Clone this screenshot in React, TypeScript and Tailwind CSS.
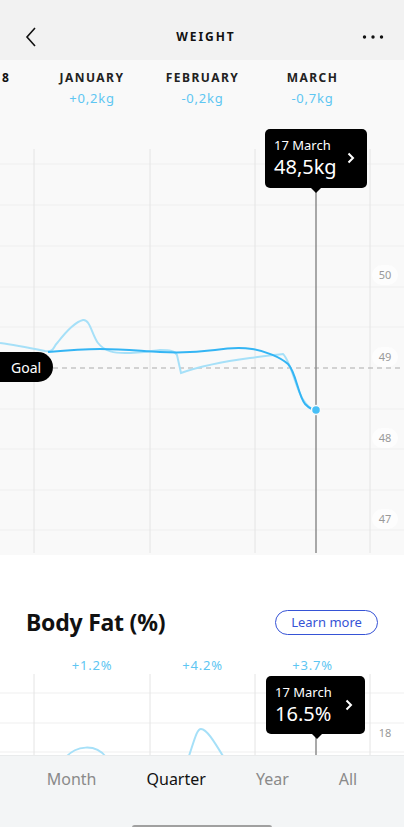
import React from 'react'

const vLines = [34, 150, 255, 370]
const hLines = [164, 205, 246, 287, 327, 409, 449, 490, 530]
const yLabels = [
  { v: '50', y: 275 },
  { v: '49', y: 357 },
  { v: '48', y: 438 },
  { v: '47', y: 519 },
]
const months = [
  { name: 'JANUARY', delta: '+0,2kg' },
  { name: 'FEBRUARY', delta: '-0,2kg' },
  { name: 'MARCH', delta: '-0,7kg' },
]

const Tooltip: React.FC<{ date: string; value: string; className: string }> = ({ date, value, className }) => (
  <div className={`absolute ${className}`}>
    <div className="relative h-full w-full rounded-[5px] bg-black pl-[9px] pt-[8px] text-white">
      <div className="text-[13px] leading-[16px]">{date}</div>
      <div className="text-[20px] leading-[28px]">{value}</div>
      <svg className="absolute right-[12px] top-[23px]" width="8" height="12" viewBox="0 0 8 12">
        <polyline points="1.5,1.5 6,6 1.5,10.5" fill="none" stroke="white" strokeWidth="2" />
      </svg>
      <div className="absolute bottom-[-5px] left-[46px] h-0 w-0 border-x-[5px] border-t-[5px] border-x-transparent border-t-black" />
    </div>
  </div>
)

export default function App() {
  return (
    <div
      className="relative h-[827px] w-[404px] overflow-hidden bg-white text-[#111]"
      style={{ fontFamily: '"Noto Sans", "Open Sans", sans-serif' }}
    >
      {/* header */}
      <div className="flex h-[60px] items-center justify-between bg-[#f2f2f2] pl-[24px] pr-[20px] pt-[13px]">
        <svg width="14" height="22" viewBox="0 0 14 22">
          <polyline points="11,2 3,11 11,20" fill="none" stroke="#111" strokeWidth="1.6" />
        </svg>
        <div className="pl-[12px] text-[12px] font-bold tracking-[0.16em]">WEIGHT</div>
        <svg width="22" height="6" viewBox="0 0 22 6">
          <circle cx="2.5" cy="3" r="1.7" fill="#111" />
          <circle cx="11" cy="3" r="1.7" fill="#111" />
          <circle cx="19.5" cy="3" r="1.7" fill="#111" />
        </svg>
      </div>

      {/* weight chart */}
      <div className="relative h-[495px] bg-[#f9f9f9]">
        <div className="relative z-10 flex pt-[10px]">
          <div className="w-[34px] pl-[2px] text-[12px] font-bold leading-[16px] tracking-[0.12em]">8</div>
          {months.map((m, i) => (
            <div key={m.name} className={`flex flex-col items-center ${i === 0 ? 'w-[116px]' : i === 1 ? 'w-[105px]' : 'w-[115px]'}`}>
              <div className="text-[12px] font-bold leading-[16px] tracking-[0.12em] text-[#222]">{m.name}</div>
              <div className="mt-[3px] text-[13px] leading-[18px] tracking-[0.06em] text-[#5ec6f2]">{m.delta}</div>
            </div>
          ))}
        </div>

        <svg className="absolute left-0 top-0" width="404" height="495" viewBox="0 60 404 495">
          {hLines.map((y) => (
            <line key={y} x1="0" x2="404" y1={y} y2={y} stroke="#efefef" strokeWidth="1" />
          ))}
          {vLines.map((x) => (
            <line key={x} x1={x} x2={x} y1="149" y2="553" stroke="#e4e4e4" strokeWidth="1" />
          ))}
          <line x1="53" x2="404" y1="368" y2="368" stroke="#ababab" strokeWidth="1" strokeDasharray="5 4" />
          <line x1="316" x2="316" y1="192" y2="553" stroke="#8c8c8c" strokeWidth="1.5" />
          <path
            d="M0,343 C15,345 30,348 45,351 C55,352 52,348 58,342 C65,333 75,322 83,320 C90,319 92,335 98,343 C105,352 115,353 125,353 C140,353 150,351 160,350 C170,350 175,351 177,355 L181,373 C195,368 220,362 250,358 C265,356 275,355 283,354 C290,360 295,385 302,398 C307,406 312,410 316,410"
            fill="none"
            stroke="#a6e0f8"
            strokeWidth="2"
          />
          <path
            d="M48,352 C70,350 85,349 100,349 C125,349 140,351 160,352 C180,353 200,352 215,350 C228,348 240,347 252,349 C265,351 280,357 288,364 C296,372 298,395 305,404 C309,408 312,410 316,410"
            fill="none"
            stroke="#34b5f4"
            strokeWidth="2"
          />
          <circle cx="316" cy="410" r="4.5" fill="#47bff6" stroke="#f9f9f9" strokeWidth="1.5" />
        </svg>

        {yLabels.map((l) => (
          <div
            key={l.v}
            className="absolute left-[372px] flex h-[20px] w-[26px] items-center justify-center rounded-full bg-[#fdfdfd] text-[11px] text-[#999]"
            style={{ top: l.y - 60 - 10 }}
          >
            {l.v}
          </div>
        ))}

        <div className="absolute left-0 top-[292px] flex h-[30px] w-[53px] items-center rounded-r-full bg-black pl-[11px] text-[14px] text-white">
          Goal
        </div>

        <Tooltip date="17 March" value="48,5kg" className="left-[265px] top-[69px] h-[59px] w-[102px]" />
      </div>

      {/* body fat */}
      <div className="relative">
        <div className="flex items-center justify-between pl-[26px] pr-[26px] pt-[50px]">
          <div className="text-[23px] font-bold tracking-[-0.01em]">Body Fat (%)</div>
          <div className="flex h-[25px] w-[103px] items-center justify-center rounded-full border-[1.5px] border-[#3653d6] text-[13px] text-[#3653d6]">
            Learn more
          </div>
        </div>
        <div className="flex pt-[16px]">
          <div className="w-[34px]" />
          {['+1.2%', '+4.2%', '+3.7%'].map((d, i) => (
            <div key={d} className={`text-center text-[13px] leading-[18px] tracking-[0.06em] text-[#5ec6f2] ${i === 0 ? 'w-[116px]' : i === 1 ? 'w-[105px]' : 'w-[115px]'}`}>
              {d}
            </div>
          ))}
        </div>
        <div className="relative h-[90px]">
          <svg className="absolute left-0 top-0" width="404" height="90" viewBox="0 673 404 90">
            {[692, 722, 751].map((y) => (
              <line key={y} x1="0" x2="404" y1={y} y2={y} stroke="#efefef" strokeWidth="1" />
            ))}
            {vLines.map((x) => (
              <line key={x} x1={x} x2={x} y1="673" y2="763" stroke="#e4e4e4" strokeWidth="1" />
            ))}
            <line x1="316" x2="316" y1="735" y2="763" stroke="#8c8c8c" strokeWidth="1.5" />
            <path d="M66,756 C76,745 95,742 106,756" fill="none" stroke="#a6e0f8" strokeWidth="2" />
            <path d="M188,758 C195,737 197,728 201,728 C207,728 215,742 226,760" fill="none" stroke="#a6e0f8" strokeWidth="2" />
          </svg>
          <div className="absolute left-[372px] top-[50px] flex h-[20px] w-[26px] items-center justify-center text-[11px] text-[#999]">
            18
          </div>
          <Tooltip date="17 March" value="16.5%" className="left-[266px] top-[2px] h-[58px] w-[99px]" />
        </div>
      </div>

      {/* bottom tabs */}
      <div className="absolute bottom-0 left-0 h-[72px] w-[404px] border-t border-[#e9ebec] bg-[#f3f5f6]">
        <div className="flex justify-center gap-[50px] pt-[12px] text-[16px] leading-[22px]">
          <span className="text-[#8a8a8a]">Month</span>
          <span className="text-[#111]">Quarter</span>
          <span className="text-[#8a8a8a]">Year</span>
          <span className="text-[#8a8a8a]">All</span>
        </div>
        <div className="absolute bottom-[-3px] left-[132px] h-[5px] w-[140px] rounded-full bg-[#a0a0a0]" />
      </div>
    </div>
  )
}
